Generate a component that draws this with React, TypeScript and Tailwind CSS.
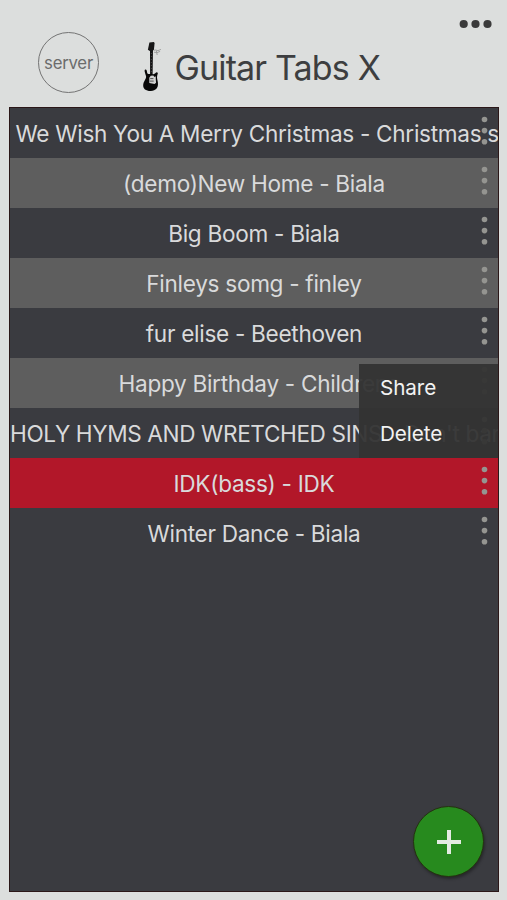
import { clsx } from "clsx";

// ─── Data ─────────────────────────────────────────────────

interface Song {
  title: string;
  tone: "dark" | "light" | "selected";
  align?: string;
}

const SONGS: Song[] = [
  { title: "We Wish You A Merry Christmas - Christmas song", tone: "dark", align: "justify-start pl-[5.5px] tracking-[-0.3px]" },
  { title: "(demo)New Home - Biala", tone: "light" },
  { title: "Big Boom - Biala", tone: "dark" },
  { title: "Finleys somg - finley", tone: "light" },
  { title: "fur elise - Beethoven", tone: "dark" },
  { title: "Happy Birthday - Childrens", tone: "light", align: "justify-start pl-[108.5px] tracking-[-0.3px]" },
  { title: "HOLY HYMS AND WRETCHED SINS - Don't bang", tone: "dark", align: "justify-start tracking-[-0.38px]" },
  { title: "IDK(bass) - IDK", tone: "selected" },
  { title: "Winter Dance - Biala", tone: "dark" },
];

const ROW_STYLES: Record<Song["tone"], string> = {
  dark: "bg-[#3a3b40]",
  light: "bg-[#5e5e5e]",
  selected: "bg-[#b21729]",
};

// ─── Icons ────────────────────────────────────────────────

function GuitarIcon() {
  return (
    <svg className="mt-px h-[52px] w-[24px] shrink-0" viewBox="0 0 24 52" fill="none">
      <path d="M9.4 1.6 13.8 1l.8 1-.7 6.8-1.5 1.4h-2.2L7.9 8.7Z" fill="#171717" />
      <path d="M10 9h3l-.4 25h-2.5Z" fill="#151515" />
      <path d="M11.4 12v20" stroke="#777" strokeWidth=".5" strokeDasharray="1 2" />
      <path
        d="M4.9 28.7c1.3-1 2 .6 2.1 2.2.1 1.7 1.4 2.3 2.8 2.1l3.4.2c2.4.1 2.2-2.2 4.1-1.8 1 .4.3 1.6-.1 3-.6 2.5.3 4.1.7 7.2.6 5.6-2.2 8.2-7 8.3-5 .1-8-2.2-7.7-6 .2-3.8 3.6-6.3 2.8-9-.4-1.8-2-5.1-1.1-6.2Z"
        fill="#080808"
      />
      <path d="m9.3 36.7 1.4-2 2.6-.2 1.3 1.4 1.3-.7c-.3 2.6.1 4.4.2 6.6l-1.5 1.2-5.3-1Z" fill="#d0d1d0" />
      <path d="M10.2 37.6h3.2M9.9 40.1h3.8" stroke="#444" strokeWidth=".9" />
      <path d="M14 9.3c2.1-1.2 3.5 1.2 5.1-.1l1.8-.9M14 11.2l3 .4 3.1-1.2M16.3 9.4l.9 4.6" stroke="#9b9c9b" strokeWidth=".9" />
    </svg>
  );
}

function MoreIcon() {
  return (
    <svg className="h-[10px] w-[33px]" viewBox="0 0 33 10" fill="#3b3b3b">
      <circle cx="4.7" cy="5" r="4.1" />
      <circle cx="16.5" cy="5" r="4.1" />
      <circle cx="28.5" cy="5" r="4.1" />
    </svg>
  );
}

function RowDots() {
  return (
    <svg className="absolute right-[10px] top-[8px] h-[30px] w-[7px]" viewBox="0 0 7 30" fill="#959591">
      <circle cx="3.5" cy="3.5" r="2.8" />
      <circle cx="3.5" cy="14.6" r="2.8" />
      <circle cx="3.5" cy="25.7" r="2.8" />
    </svg>
  );
}

// ─── Song row ─────────────────────────────────────────────

function SongRow({ song }: { song: Song }) {
  return (
    <li
      className={clsx(
        "relative flex h-[50px] items-center overflow-hidden pt-[2px] text-[22.6px] text-[#d9dadb]",
        ROW_STYLES[song.tone],
        song.align ?? "justify-center tracking-[-0.3px]"
      )}
    >
      <span className="whitespace-nowrap">{song.title}</span>
      <RowDots />
    </li>
  );
}

// ─── App ──────────────────────────────────────────────────

export default function App() {
  return (
    <div className="flex h-[900px] w-[507px] flex-col bg-[#dcdedd] pb-[8px] pl-[9px] pr-[8px] font-['Inter','Liberation_Sans',sans-serif]">
      <header className="relative flex h-[107px] shrink-0 pl-[29px] pt-[32px]">
        <button className="flex size-[61px] shrink-0 items-center justify-center rounded-full border border-[#747474] pt-[3px] text-[16.8px] tracking-[-0.25px] text-[#6b6c6c]">
          server
        </button>
        <div className="ml-[41px] mt-[8px] flex h-[54px]">
          <GuitarIcon />
          <h1 className="ml-[10.5px] whitespace-nowrap text-[34px] leading-[56px] tracking-[-0.85px] text-[#3d3e40]">
            Guitar Tabs X
          </h1>
        </div>
        <button className="absolute right-[7px] top-[19px]" aria-label="More">
          <MoreIcon />
        </button>
      </header>

      <main className="relative min-h-0 flex-1 border border-[#2b1718] bg-[#3a3b40]">
        <ul>
          {SONGS.map((song) => (
            <SongRow key={song.title} song={song} />
          ))}
        </ul>

        <div className="absolute right-0 top-[256px] flex h-[94px] w-[139px] flex-col bg-[#333333]/95 pl-[21px] text-[20.7px] tracking-[-0.1px] text-[#f2f2f2]">
          <button className="h-[47px] pt-px text-left">Share</button>
          <button className="h-[46px] text-left">Delete</button>
        </div>

        <button
          className="absolute bottom-[14px] right-[14px] flex size-[71px] items-center justify-center rounded-full border border-[#24330f] bg-[#278a1e] shadow-[1px_2px_3px_rgba(0,0,0,0.35)]"
          aria-label="Add"
        >
          <svg className="size-[24px]" viewBox="0 0 24 24" stroke="#e4ebe2" strokeWidth="4">
            <path d="M12 0v24M0 12h24" />
          </svg>
        </button>
      </main>
    </div>
  );
}
